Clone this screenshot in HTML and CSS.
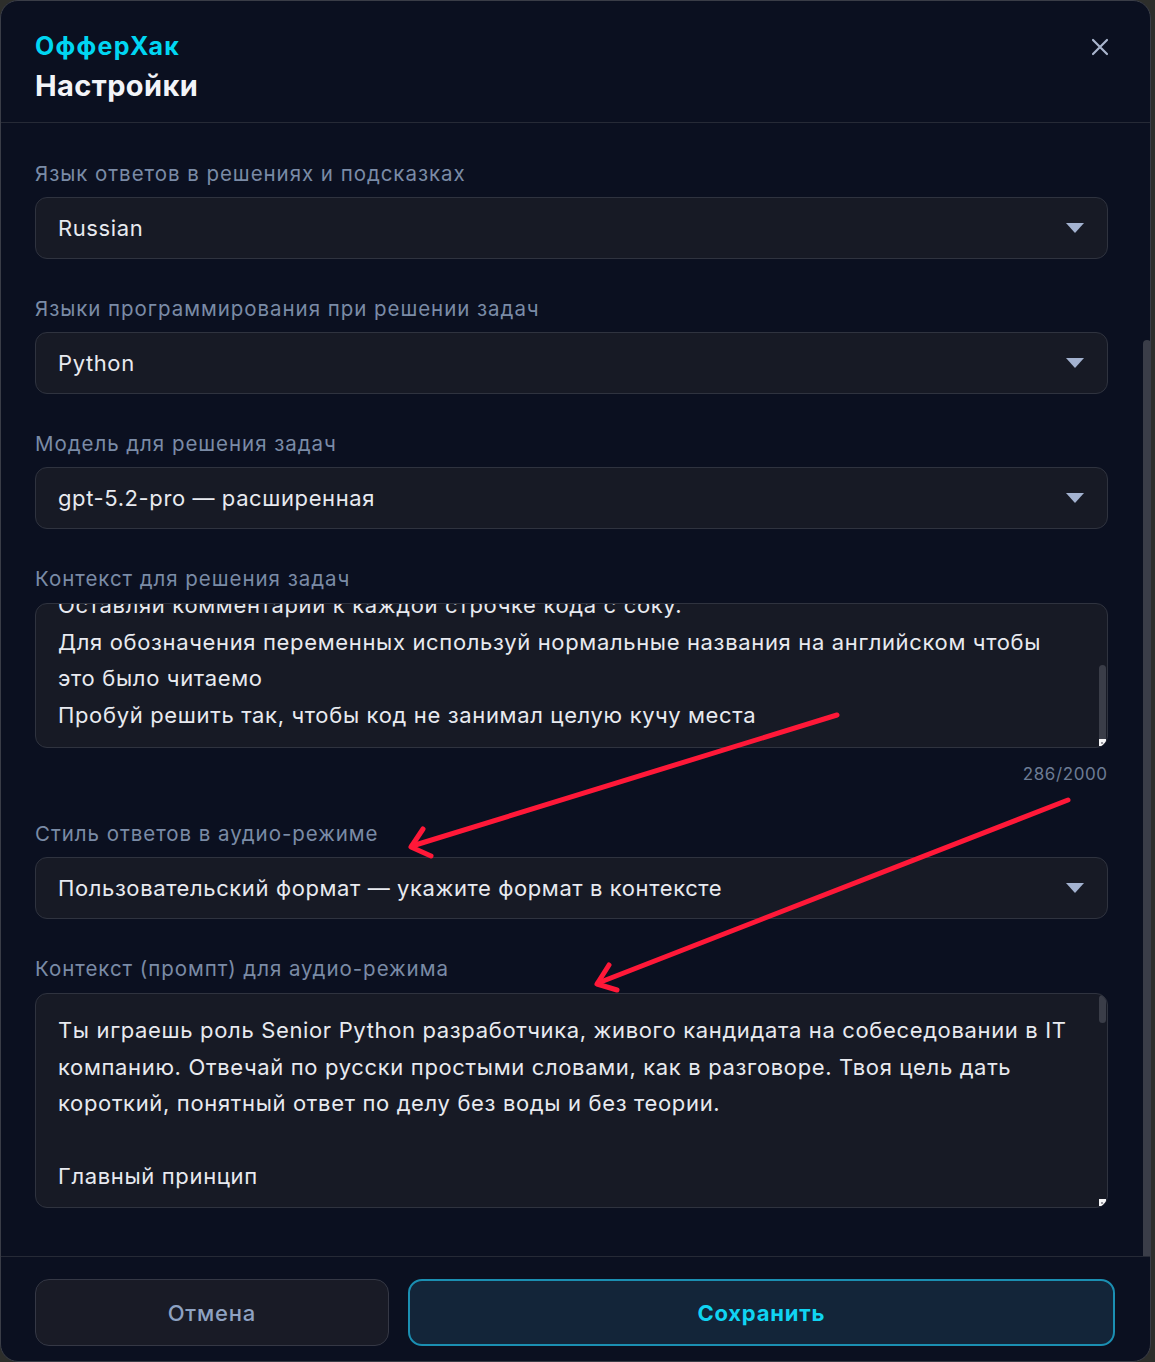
FILE: index.html
```html
<!DOCTYPE html>
<html lang="ru">
<head>
	<meta charset="UTF-8">
	<title>Настройки</title>
	<link rel="stylesheet" href="styles.css">
</head>
<body>
	<div class="modal">
		<div class="head">
			<div class="brand">ОфферХак</div>
			<div class="title">Настройки</div>
			<a href="#" class="close">
				<svg width="18" height="18" viewBox="0 0 18 18"><path d="M2 2L16 16M16 2L2 16" stroke="#a9b5cd" stroke-width="2.2" stroke-linecap="round"/></svg>
			</a>
		</div>
		<div class="body">
			<div class="content">
				<div class="field">
					<div class="label">Язык ответов в решениях и подсказках</div>
					<div class="select"><span>Russian</span><i class="caret"></i></div>
				</div>
				<div class="field">
					<div class="label">Языки программирования при решении задач</div>
					<div class="select"><span>Python</span><i class="caret"></i></div>
				</div>
				<div class="field">
					<div class="label">Модель для решения задач</div>
					<div class="select"><span>gpt-5.2-pro — расширенная</span><i class="caret"></i></div>
				</div>
				<div class="field">
					<div class="label">Контекст для решения задач</div>
					<div class="area area-short">
						<div class="text scrolled">Оставляй комментарии к каждой строчке кода с соку.<br>Для обозначения переменных используй нормальные названия на английском чтобы<br>это было читаемо<br>Пробуй решить так, чтобы код не занимал целую кучу места</div>
						<div class="thumb thumb-mid"></div>
						<div class="grip"></div>
					</div>
					<div class="counter">286/2000</div>
				</div>
				<div class="field">
					<div class="label">Стиль ответов в аудио-режиме</div>
					<div class="select"><span>Пользовательский формат — укажите формат в контексте</span><i class="caret"></i></div>
				</div>
				<div class="field">
					<div class="label">Контекст (промпт) для аудио-режима</div>
					<div class="area area-tall">
						<div class="text">Ты играешь роль Senior Python разработчика, живого кандидата на собеседовании в IT<br>компанию. Отвечай по русски простыми словами, как в разговоре. Твоя цель дать<br>короткий, понятный ответ по делу без воды и без теории.<br><br>Главный принцип</div>
						<div class="thumb thumb-top"></div>
						<div class="grip"></div>
					</div>
				</div>
			</div>
			<div class="scroll"><div class="scroll-thumb"></div></div>
		</div>
		<div class="foot">
			<a href="#" class="btn cancel">Отмена</a>
			<a href="#" class="btn save">Сохранить</a>
		</div>
		<svg class="marks" width="1155" height="1362" viewBox="0 0 1155 1362">
			<g stroke="#ff1838" stroke-width="5" stroke-linecap="round" stroke-linejoin="round" fill="none">
				<path d="M837 715L412 846"/>
				<path d="M423 829L411 847L431 856"/>
				<path d="M1068 800L598 983"/>
				<path d="M609 965L597 984L617 990"/>
			</g>
		</svg>
	</div>
</body>
</html>
```
FILE: styles.css
```css
*{
	margin: 0;
	padding: 0;
	box-sizing: border-box;
}
a{
	text-decoration: none;
}
body{
	width: 1155px;
	height: 1362px;
	background: #2d2e2b;
	font-family: Inter, "Noto Sans", sans-serif;
	overflow: hidden;
}
.modal{
	position: relative;
	width: 1151px;
	height: 1362px;
	background: #0b1020;
	border: 1px solid #3a3d47;
	border-radius: 18px;
	display: flex;
	flex-direction: column;
	overflow: hidden;
}
.head{
	position: relative;
	height: 122px;
	flex: none;
	padding: 30px 34px 0;
	border-bottom: 1px solid #262a36;
}
.brand{
	font-size: 25px;
	line-height: 30px;
	font-weight: 700;
	color: #00d6f2;
	letter-spacing: 1.3px;
}
.title{
	margin-top: 5px;
	font-size: 29px;
	line-height: 40px;
	font-weight: 700;
	color: #f2f4f8;
	letter-spacing: 0.4px;
}
.close{
	position: absolute;
	right: 41px;
	top: 37px;
	width: 18px;
	height: 18px;
	display: block;
}
.body{
	flex: 1;
	display: flex;
	min-height: 0;
	overflow: hidden;
	border-bottom: 1px solid #262a36;
}
.content{
	flex: 1;
	padding: 39px 35px 0 34px;
}
.field{
	margin-bottom: 38px;
}
.label{
	font-size: 20.5px;
	line-height: 24px;
	color: #7a8ba6;
	letter-spacing: 0.95px;
	margin-bottom: 11px;
}
.select{
	height: 62px;
	background: #171a25;
	border: 1px solid #2f333f;
	border-radius: 12px;
	display: flex;
	align-items: center;
	justify-content: space-between;
	padding: 0 23px 0 22px;
	font-size: 22px;
	letter-spacing: 0.6px;
	color: #e8eaf0;
}
.caret{
	width: 0;
	height: 0;
	border-left: 9px solid transparent;
	border-right: 9px solid transparent;
	border-top: 10px solid #a3b2d0;
}
.area{
	position: relative;
	margin-top: 12px;
	background: #171a25;
	border: 1px solid #2f333f;
	border-radius: 12px;
	overflow: hidden;
	padding: 0 40px 0 22px;
}
.area-short{
	height: 145px;
}
.area-tall{
	height: 215px;
	padding-top: 18px;
}
.text{
	font-size: 22px;
	line-height: 36.5px;
	letter-spacing: 0.65px;
	color: #e8eaf0;
	white-space: nowrap;
}
.scrolled{
	margin-top: -17px;
}
.thumb{
	position: absolute;
	right: 1px;
	width: 7px;
	background: #3a3d48;
	border-radius: 4px;
}
.thumb-mid{
	top: 61px;
	height: 76px;
}
.thumb-top{
	top: 1px;
	height: 28px;
}
.grip{
	position: absolute;
	right: 1px;
	bottom: 1px;
	width: 7px;
	height: 7px;
	background: #f4f4f6;
	border: 2px solid #f4f4f6;
}
.grip:after{
	content: "";
	display: block;
	width: 2px;
	height: 2px;
	margin: 0.5px;
	background: #9a9aa0;
}
.counter{
	margin-top: 16px;
	text-align: right;
	font-size: 17px;
	line-height: 20px;
	letter-spacing: 0.6px;
	color: #6c7b94;
}
.scroll{
	width: 8px;
	flex: none;
	display: flex;
	flex-direction: column;
}
.scroll-thumb{
	flex: 1;
	margin-top: 217px;
	background: #3a3d48;
	border-radius: 4px 4px 0 0;
}
.foot{
	flex: none;
	display: flex;
	gap: 19px;
	padding: 22px 35px 15px 34px;
}
.btn{
	height: 67px;
	border-radius: 14px;
	display: flex;
	align-items: center;
	justify-content: center;
	font-size: 22px;
	letter-spacing: 0.8px;
}
.cancel{
	flex: 1;
	background: #191b26;
	border: 1px solid #353845;
	color: #8ea2c2;
	font-weight: 500;
}
.save{
	flex: 2;
	background: #132539;
	border: 2px solid #1b8fb2;
	color: #10d4f2;
	font-weight: 700;
}
.marks{
	position: absolute;
	left: -1px;
	top: -1px;
	pointer-events: none;
}
```
